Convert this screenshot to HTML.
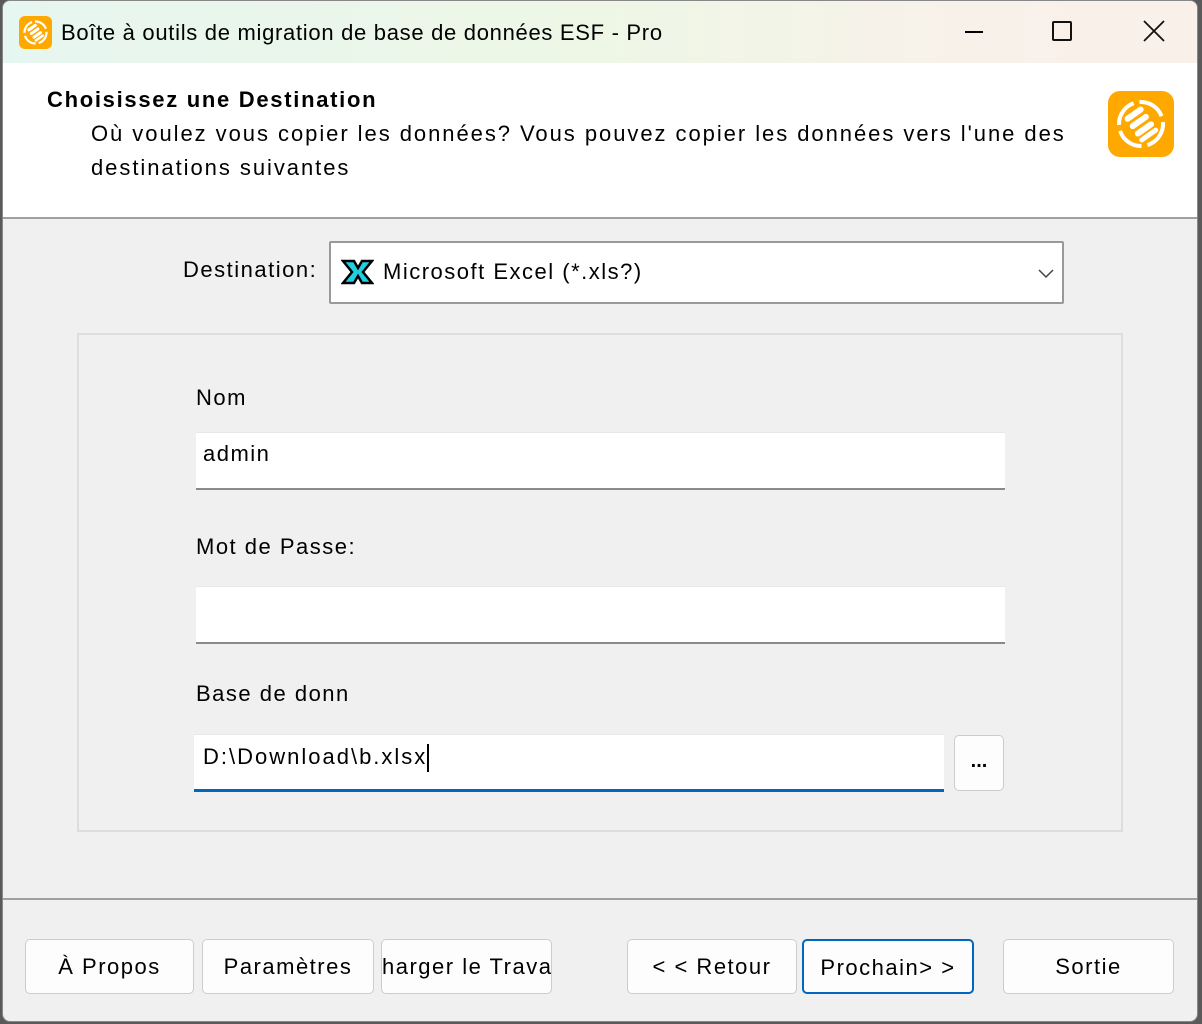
<!DOCTYPE html>
<html><head><meta charset="utf-8"><style>
*{margin:0;padding:0;box-sizing:border-box}
body{width:1202px;height:1024px;overflow:hidden;background:#5a5a5a;font-family:"Liberation Sans",sans-serif;color:#000;position:relative;letter-spacing:1.5px}
.win{position:absolute;left:2px;top:0;width:1196px;height:1022px;background:#f0f0f0;border-radius:8px 8px 8px 8px;overflow:hidden;border:1px solid #888}
.tb{position:absolute;left:0;top:0;right:0;height:62px;background:linear-gradient(90deg,#e6f6f0 0%,#eef7e6 50%,#f8f1ea 80%,#faf0ea 100%)}
.abs{position:absolute;white-space:nowrap}
.hdr{position:absolute;left:0;top:62px;right:0;height:156px;background:#fff;border-bottom:2px solid #a0a0a0}
.btn{position:absolute;top:938px;height:55px;background:#fdfdfd;border:1px solid #ccc;border-radius:5px;font-size:22px;text-align:center;line-height:53px;overflow:hidden;white-space:nowrap}
.in{position:absolute;background:#fff;border-bottom:2px solid #8a8a8a;border-top:1px solid #e8e8e8;font-size:22px;padding-left:7px}
</style></head><body>
<div class="win">
<div class="tb">
<svg class="abs" style="left:16px;top:15px" width="33" height="33" viewBox="0 0 33 33"><rect width="33" height="33" rx="6" fill="#ffa800"/><circle cx="16.5" cy="16.5" r="11" fill="none" stroke="#fff" stroke-width="2.2" stroke-dasharray="14 3"/><g transform="rotate(-35 16.5 16.5)" fill="#fff"><rect x="11" y="9" width="11" height="3" rx="1.5"/><rect x="11" y="13.5" width="11" height="3" rx="1.5"/><rect x="11" y="18" width="11" height="3" rx="1.5"/><rect x="11" y="22" width="11" height="2.5" rx="1.2"/></g></svg>
<div class="abs" style="left:58px;top:19px;font-size:22px;letter-spacing:0.7px">Boîte à outils de migration de base de données ESF - Pro</div>
<div class="abs" style="left:962px;top:30px;width:18px;height:1.5px;background:#000"></div>
<div class="abs" style="left:1049px;top:20px;width:20px;height:20px;border:2px solid #111;border-radius:2px"></div>
<svg class="abs" style="left:1140px;top:19px" width="22" height="22"><path d="M1 1L21 21M21 1L1 21" stroke="#111" stroke-width="1.8"/></svg>
</div>
<div class="hdr">
<div class="abs" style="left:44px;top:24px;font-size:22px;font-weight:bold;letter-spacing:1.7px">Choisissez une Destination</div>
<div class="abs" style="left:88px;top:54px;font-size:22px;line-height:34px;letter-spacing:1.95px">Où voulez vous copier les données? Vous pouvez copier les données vers l'une des<br>destinations suivantes</div>
<svg class="abs" style="left:1105px;top:28px" width="66" height="66" viewBox="0 0 33 33"><rect width="33" height="33" rx="6" fill="#ffa800"/><circle cx="16.5" cy="16.5" r="11" fill="none" stroke="#fff" stroke-width="2" stroke-dasharray="14 3"/><g transform="rotate(-35 16.5 16.5)" fill="#fff"><rect x="11" y="9" width="11" height="3" rx="1.5"/><rect x="11" y="13.5" width="11" height="3" rx="1.5"/><rect x="11" y="18" width="11" height="3" rx="1.5"/><rect x="11" y="22" width="11" height="2.5" rx="1.2"/></g></svg>
</div>
<div class="abs" style="left:180px;top:256px;font-size:22px">Destination:</div>
<div class="abs" style="left:326px;top:240px;width:735px;height:63px;background:#fff;border:2px solid #999;border-radius:2px">
<svg class="abs" style="left:10px;top:16px" width="33" height="26"><path d="M2 2H13L17 9L21 2H31L22 13L31 24H21L17 17L13 24H2L11 13Z" fill="#21d0e0" stroke="#000" stroke-width="2.5"/></svg>
<div class="abs" style="left:52px;top:16px;font-size:22px">Microsoft Excel (*.xls?)</div>
<svg class="abs" style="left:707px;top:26px" width="16" height="10"><path d="M1 1L8 8L15 1" fill="none" stroke="#444" stroke-width="1.5"/></svg>
</div>
<div class="abs" style="left:74px;top:332px;width:1046px;height:499px;border:2px solid #ddd"></div>
<div class="abs" style="left:193px;top:384px;font-size:22px">Nom</div>
<div class="in" style="left:193px;top:431px;width:809px;height:58px;line-height:42px">admin</div>
<div class="abs" style="left:193px;top:533px;font-size:22px">Mot de Passe:</div>
<div class="in" style="left:193px;top:585px;width:809px;height:58px"></div>
<div class="abs" style="left:193px;top:680px;font-size:22px">Base de donn</div>
<div class="in" style="left:191px;top:733px;width:750px;height:58px;line-height:44px;border-bottom:3px solid #0067c0;padding-left:9px;letter-spacing:2px">D:\Download\b.xlsx<span style="display:inline-block;width:1.5px;height:28px;background:#000;vertical-align:middle"></span></div>
<div class="abs" style="left:951px;top:734px;width:50px;height:56px;background:#fdfdfd;border:1.5px solid #ccc;border-radius:5px;text-align:center;line-height:50px;font-size:20px;font-weight:bold;letter-spacing:0">...</div>
<div class="abs" style="left:0;top:897px;width:1196px;height:2px;background:#a0a0a0"></div>
<div class="btn" style="left:22px;width:169px">À Propos</div>
<div class="btn" style="left:199px;width:172px">Paramètres</div>
<div class="btn" style="left:378px;width:171px;text-align:right;padding-right:2px">harger le Trava</div>
<div class="btn" style="left:624px;width:170px">&lt; &lt; Retour</div>
<div class="btn" style="left:799px;width:172px;border:2px solid #0067c0">Prochain&gt; &gt;</div>
<div class="btn" style="left:1000px;width:171px">Sortie</div>
</div>
</body></html>
